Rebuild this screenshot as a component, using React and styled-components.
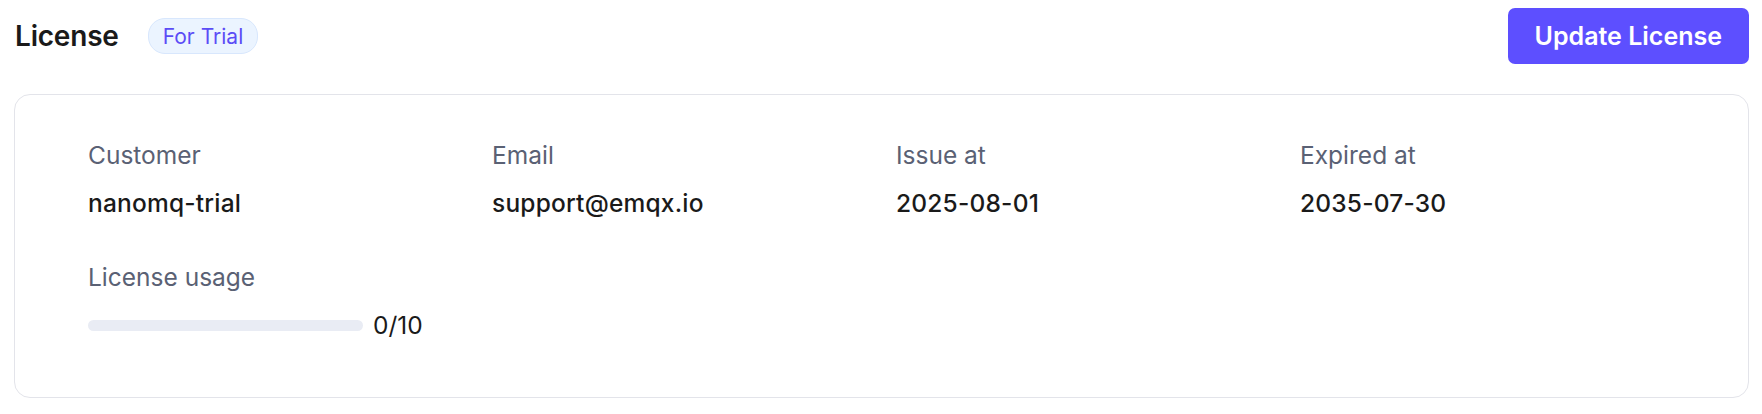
import styled, { createGlobalStyle } from "styled-components";

const GlobalStyle = createGlobalStyle`
  body {
    margin: 0;
    background: #ffffff;
    font-family: Inter, "Noto Sans", sans-serif;
  }
`

const fields = [
    { label: "Customer", value: "nanomq-trial" },
    { label: "Email", value: "support@emqx.io" },
    { label: "Issue at", value: "2025-08-01" },
    { label: "Expired at", value: "2035-07-30" },
]

export default function App() {
    const used = 0
    const total = 10

    return (
        <Page>
            <GlobalStyle />
            <Header>
                <TitleGroup>
                    <Title>License</Title>
                    <Badge>For Trial</Badge>
                </TitleGroup>
                <PrimaryButton>Update License</PrimaryButton>
            </Header>
            <Card>
                <FieldGrid>
                    {fields.map((f) => (
                        <Field key={f.label}>
                            <Label>{f.label}</Label>
                            <Value>{f.value}</Value>
                        </Field>
                    ))}
                    <Field>
                        <Label>License usage</Label>
                        <Usage>
                            <Track>
                                <Fill style={{ width: `${(used / total) * 100}%` }} />
                            </Track>
                            <UsageText>{used}/{total}</UsageText>
                        </Usage>
                    </Field>
                </FieldGrid>
            </Card>
        </Page>
    )
};

const Page = styled.div`
  padding: 8px 13px 16px 14px;
`

const Header = styled.div`
  height: 56px;
  display: flex;
  justify-content: space-between;
  align-items: center;
`

const TitleGroup = styled.div`
  display: flex;
  align-items: center;
  gap: 29px;
  padding-left: 1px;
`

const Title = styled.h1`
  margin: 0;
  font-size: 28px;
  font-weight: 600;
  color: #1a1a1a;
  letter-spacing: -0.2px;
`

const Badge = styled.span`
  height: 34px;
  padding: 0 14px;
  display: inline-flex;
  align-items: center;
  border-radius: 17px;
  background: #ebf4ff;
  border: 1px solid #d8e7fd;
  color: #5b4cf6;
  font-size: 21px;
`

const PrimaryButton = styled.button`
  height: 56px;
  padding: 0 27px;
  border: none;
  border-radius: 7px;
  background: #5d4fff;
  color: #ffffff;
  font-family: inherit;
  font-size: 25px;
  font-weight: 600;
  cursor: pointer;
`

const Card = styled.div`
  margin-top: 30px;
  border: 1px solid #e3e4ea;
  border-radius: 16px;
  padding: 44px 0 56px 73px;
`

const FieldGrid = styled.div`
  display: grid;
  grid-template-columns: repeat(4, 404px);
  row-gap: 42px;
`

const Field = styled.div`
  display: flex;
  flex-direction: column;
  gap: 16px;
`

const Label = styled.div`
  font-size: 24.5px;
  line-height: 32px;
  color: #5a6174;
`

const Value = styled.div`
  font-size: 24.5px;
  line-height: 32px;
  font-weight: 500;
  color: #1a1a1a;
  letter-spacing: 0.2px;
`

const Usage = styled.div`
  height: 32px;
  display: flex;
  align-items: center;
  gap: 10px;
`

const Track = styled.div`
  width: 275px;
  height: 11px;
  border-radius: 6px;
  background: #e9ecf4;
  overflow: hidden;
`

const Fill = styled.div`
  height: 100%;
  background: #5d4fff;
`

const UsageText = styled.span`
  font-size: 24.5px;
  color: #1a1a1a;
`
